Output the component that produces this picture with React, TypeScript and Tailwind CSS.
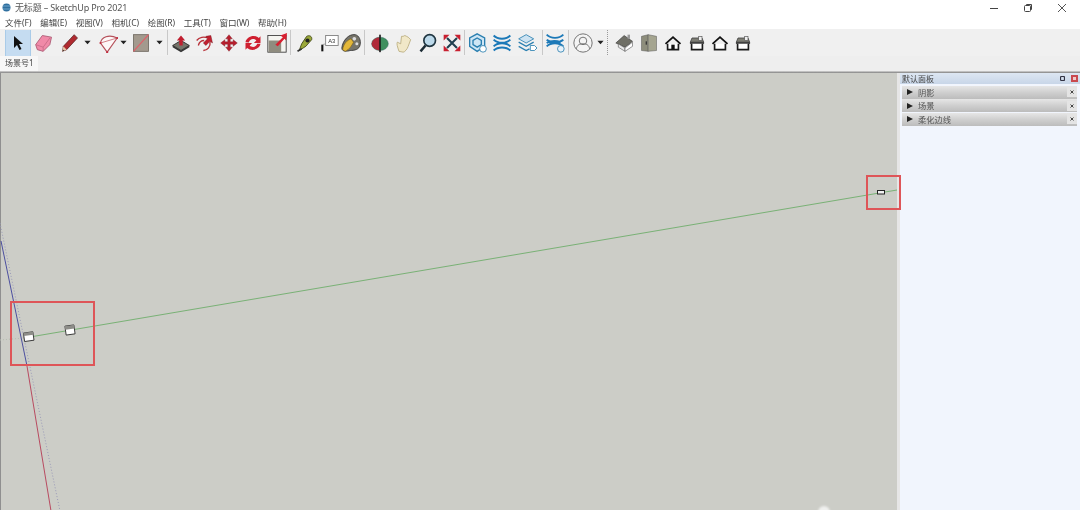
import React from "react";

const CJK = "font-['Noto_Sans','Noto_Sans_CJK_SC',sans-serif]";

function Ico({ children, className = "" }: { children?: React.ReactNode; className?: string }) {
  const width = className.includes("w-[") ? "" : "w-[24px]";
  return (
    <div className={`h-[26px] shrink-0 flex items-center justify-center ${width} ${className}`}>
      <svg width="20" height="20" viewBox="0 0 24 24" className="shrink-0">{children}</svg>
    </div>
  );
}
function Dd({ className = "" }: { className?: string }) {
  const width = className.includes("w-[") ? "" : "w-[8px]";
  return (
    <div className={`h-[26px] shrink-0 flex items-center justify-center ${width} ${className}`}>
      <svg width="7" height="5" viewBox="0 0 8 5" className="shrink-0"><path d="M0.500 0.500h7L4 4.500z" fill="#222" /></svg>
    </div>
  );
}
function Sep({ className = "" }: { className?: string }) {
  return <div className={`h-[25px] w-[1px] shrink-0 bg-[#c8c8c8] ${className}`} />;
}
function MenuItem({ t }: { t: string }) {
  return <span className="text-[8.5px] leading-[14px] text-[#444] whitespace-nowrap">{t}</span>;
}
function PanelRow({ t }: { t: string }) {
  return (
    <div className="h-[13px] ml-[2px] mr-[3px] mb-[0.5px] flex items-center bg-gradient-to-b from-[#e6e6e6] via-[#cfcfcf] to-[#bcbcbc]">
      <svg width="6" height="6" viewBox="0 0 6 6" className="ml-[5px]"><path d="M0 0l6 3-6 3z" fill="#222" /></svg>
      <span className="ml-[5px] text-[8.25px] leading-[13px] text-[#555]">{t}</span>
      <div className="ml-auto w-[10px] h-[10px] bg-[#e4e4e4] flex items-center justify-center">
        <svg width="6" height="6" viewBox="0 0 6 6"><path d="M1.500 1.500l3 3M4.500 1.500l-3 3" stroke="#444" strokeWidth="1" /></svg>
      </div>
    </div>
  );
}

function House({ roof = "#6f6f66", body = "#fff", door = false }: { roof?: string; body?: string; door?: boolean }) {
  return (
    <>
      <path d="M5.500 13v7h13v-7" fill={body} stroke="#1c1c1c" strokeWidth="2" />
      <path d="M3 13l9-8 9 8" fill="none" stroke={roof} strokeWidth="2.200" />
      {door && <rect x="10" y="14" width="4" height="6" fill="#111" />}
    </>
  );
}
function Shed() {
  return (
    <>
      <path d="M4 11l2-5h12l2 5z" fill="#7d7d74" stroke="#444" />
      <rect x="14" y="4" width="4" height="5" fill="#eee" stroke="#555" strokeWidth="0.800" />
      <rect x="3.500" y="11" width="17" height="2" fill="#333" />
      <path d="M5.500 13v7h13v-7" fill="#fff" stroke="#1c1c1c" strokeWidth="2" />
    </>
  );
}

export default function App() {
  return (
    <div className={`w-[1080px] h-[510px] overflow-hidden flex flex-col bg-white blur-[0.35px] ${CJK}`}>
      {/* title */}
      <div className="h-[15px] flex items-center shrink-0 relative">
        <svg width="9" height="9" viewBox="0 0 9 9" className="ml-[2px]"><circle cx="4.500" cy="4.500" r="4" fill="#2f6f9f" /><path d="M1 3h7M1 6h7" stroke="#8fc0e0" strokeWidth="0.700" /></svg>
        <span className="ml-[4px] text-[9px] leading-[14px] text-[#555] tracking-[-0.16px] whitespace-nowrap">无标题 – SketchUp Pro 2021</span>
        <div className="ml-auto flex items-center">
          <svg width="10" height="10" viewBox="0 0 10 10" className="mr-[24px]"><path d="M1 5.500h8" stroke="#444" /></svg>
          <svg width="10" height="10" viewBox="0 0 10 10" className="mr-[24px]"><rect x="1.500" y="2.500" width="6" height="6" rx="1" fill="none" stroke="#444" /><path d="M3.500 2.500v-1h5v5h-1" fill="none" stroke="#444" /></svg>
          <svg width="10" height="10" viewBox="0 0 10 10" className="mr-[13px]"><path d="M1 1l8 8M9 1L1 9" stroke="#555" /></svg>
        </div>
      </div>
      {/* menu */}
      <div className="h-[14px] shrink-0 flex items-center gap-[8.7px] pl-[5px] pt-[1px]">
        {["文件(F)", "编辑(E)", "视图(V)", "相机(C)", "绘图(R)", "工具(T)", "窗口(W)", "帮助(H)"].map((m) => (
          <MenuItem key={m} t={m} />
        ))}
      </div>
      {/* toolbar */}
      <div className="h-[27px] shrink-0 bg-[#f0f0f0] flex items-center pl-[5px]">
        <div className="w-[26px] h-[26px] bg-[#c5dcf1] border-x border-[#a9cbe8] flex items-center justify-center shrink-0">
          <svg width="14" height="16" viewBox="0 0 14 16"><path d="M3 1v12l3-3 2.500 5 2-1-2.500-5h4z" fill="#111" /></svg>
        </div>
        <Ico className="w-[26px]">
          <path d="M2 14L10 3l11 2-2 9-8 8-7-2z" fill="#f08aa8" stroke="#a8566f" />
          <path d="M2 14l9 3 8-11M11 17l0 5" fill="none" stroke="#c66a86" />
        </Ico>
        <Ico className="w-[26px]">
          <path d="M3 22l1-6L17 2l4 4L8 20z" fill="#b02a30" stroke="#4a1a1a" strokeWidth="0.800" />
          <path d="M3 22l1-6 4 4z" fill="#e8c8a8" />
          <path d="M3 22l1-2 1 1z" fill="#111" />
        </Ico>
        <Dd />
        <Ico className="w-[24px] ml-[5px]">
          <path d="M3 12C4 5 13 1 23 6L11 23z" fill="#fdf7f7" stroke="#b5505a" strokeWidth="1.400" />
          <path d="M3 12l20-6" stroke="#c96a72" strokeWidth="1" />
          <circle cx="11" cy="23" r="1.300" fill="#c03040" />
          <circle cx="3" cy="12" r="1.300" fill="#c03040" />
          <circle cx="23" cy="6" r="1.300" fill="#c03040" />
        </Ico>
        <Dd className="w-[6px]" />
        <Ico className="w-[24px] ml-[3px]">
          <rect x="3" y="2" width="18" height="20" fill="#a39a8e" stroke="#6d675e" />
          <path d="M3 22L21 2" stroke="#e0606a" strokeWidth="1.500" />
        </Ico>
        <Dd className="ml-[2px]" />
        <Sep className="ml-[4px]" />
        <Ico className="ml-[1px]">
          <path d="M2 15l10-6 10 6-10 6z" fill="#74746a" stroke="#222" />
          <path d="M2 15v2l10 6 10-6v-2l-10 6z" fill="#333" />
          <path d="M12 3l5 6h-3v6h-4V9H7z" fill="#c01f2f" />
        </Ico>
        <Ico>
          <path d="M2 9c3-4 9-5 13-3M4 15c1-4 4-6 7-6M10 21c5 0 9-5 8-11" fill="none" stroke="#b83038" strokeWidth="1.600" />
          <path d="M19 3l2 9-3-2-5 5-3-3 5-5-2-3z" fill="#c01f2f" stroke="#701018" strokeWidth="0.500" />
        </Ico>
        <Ico>
          <path d="M12 2l4 5h-2.500v3.500H17V8l5 4-5 4v-2.500h-3.500V17H16l-4 5-4-5h2.500v-3.500H7V16l-5-4 5-4v2.500h3.500V7H8z" fill="#b81f2d" stroke="#6a1018" strokeWidth="0.400" />
        </Ico>
        <Ico>
          <path d="M3 11C4 5 13 1 19 6l2-2v8h-8l3-3C13 6 8 7 7 11.500z" fill="#cf2030" />
          <path d="M21 13c-1 6-10 10-16 5l-2 2v-8h8l-3 3c3 3 8 2 9-2z" fill="#cf2030" />
        </Ico>
        <Ico>
          <rect x="1" y="3" width="22" height="20" fill="#f4f4f0" stroke="#333" />
          <rect x="2" y="9" width="15" height="14" fill="#8f8c7f" />
          <path d="M10 14L19 5l-3-2 8-3-1 9-2-2-8 9z" fill="#d81f30" />
        </Ico>
        <Sep className="ml-[1px]" />
        <Ico className="ml-[2px]">
          <path d="M5 21l3-8 6-9c3-2 7 0 6 4l-7 8z" fill="#9aa83a" stroke="#3a4010" />
          <circle cx="15" cy="9" r="2.500" fill="#222" />
          <path d="M3 22l5-3" stroke="#333" strokeWidth="2" />
        </Ico>
        <Ico>
          <rect x="8" y="3" width="15" height="12" fill="#fff" stroke="#777" />
          <text x="11" y="12" fontSize="7" fill="#333" fontFamily="Liberation Sans, sans-serif">A3</text>
          <path d="M4 14v8" stroke="#111" strokeWidth="2.500" />
          <path d="M4 14l4-1" stroke="#999" />
        </Ico>
        <Ico className="w-[20px]">
          <path d="M1 18C2 9 9 1 17 2c5 1 7 7 6 12-1 6-7 7-12 7-3 1-10 2-10-3z" fill="#76746a" stroke="#333" />
          <path d="M2 20c1-7 5-11 10-13l3 4c-2 4-5 9-10 11z" fill="#e4b83a" stroke="#6c5410" strokeWidth="0.600" />
          <circle cx="16" cy="7" r="2.200" fill="#ddd" /><circle cx="19" cy="13" r="1.800" fill="#ddd" />
        </Ico>
        <Sep className="ml-[3px]" />
        <Ico className="ml-[3px]">
          <ellipse cx="12" cy="13" rx="10" ry="8" fill="#3f8f5f" stroke="#255" strokeWidth="0.500" />
          <path d="M2 13c0-4 5-8 10-8v16c-5 0-10-4-10-8z" fill="#b02a3a" />
          <rect x="11" y="2" width="2" height="21" fill="#1f1f1f" />
        </Ico>
        <Ico>
          <path d="M6 22C4 16 3 13 4 11l4 2 1-9 2 0 2-1 2 1 2 1 3 3-3 8c-1 3-4 7-6 7z" fill="#f1e8c8" stroke="#b8ab7c" />
        </Ico>
        <Ico>
          <circle cx="14" cy="9" r="7" fill="#bcd9ea" stroke="#1f3540" strokeWidth="2" />
          <path d="M9 15L3 22" stroke="#1a2a33" strokeWidth="3" />
        </Ico>
        <Ico>
          <path d="M6 6l12 12M18 6L6 18" stroke="#204050" strokeWidth="2.500" />
          <path d="M2 2h7L2 9zM22 2v7l-7-7zM2 22v-7l7 7zM22 22h-7l7-7z" fill="#c82030" />
        </Ico>
        <Sep />
        <Ico className="ml-[1px]">
          <path d="M11 1l9 5v10l-9 6-9-6V6z" fill="#cfe6f5" stroke="#2a7fb0" strokeWidth="1.600" />
          <path d="M11 6l5 3v5l-5 3-5-3V9z" fill="none" stroke="#2a7fb0" strokeWidth="1.600" />
          <circle cx="18" cy="19" r="4" fill="#fff" stroke="#2a7fb0" />
        </Ico>
        <Ico>
          <path d="M2 3c5 5 15 5 20 0M2 21c5-5 15-5 20 0M2 8c5 5 15 5 20 0M2 16c5-5 15-5 20 0" fill="none" stroke="#1c79b8" strokeWidth="2.400" />
        </Ico>
        <Ico className="w-[26px]">
          <path d="M2 7l9-5 9 5-9 5z" fill="#cde3f2" stroke="#2a7fb0" />
          <path d="M2 11l9 5 9-5M2 16l9 5 4-2" fill="none" stroke="#2a7fb0" strokeWidth="1.600" />
          <path d="M16 15h5l3 3-3 3h-5z" fill="#fff" stroke="#2a7fb0" />
        </Ico>
        <Sep className="ml-[2px]" />
        <Ico>
          <path d="M2 2c5 5 15 5 20 0M2 16c5-5 15-5 20 0M2 8c5 4 15 4 20 0M2 12c5-3 12-3 17-1" fill="none" stroke="#1c79b8" strokeWidth="2.200" />
          <circle cx="19" cy="19" r="4" fill="#e8f2fa" stroke="#2a7fb0" />
        </Ico>
        <Sep className="ml-[1px]" />
        <Ico className="ml-[2px]">
          <circle cx="12" cy="12" r="11" fill="#f4f4f4" stroke="#6a6a6a" strokeWidth="1.100" />
          <circle cx="12" cy="9.500" r="4.500" fill="none" stroke="#6a6a6a" strokeWidth="1.100" />
          <path d="M4 19c1-5 4-6 8-6s7 1 8 6" fill="none" stroke="#6a6a6a" strokeWidth="1.100" />
        </Ico>
        <Dd className="ml-[1px]" />
        <div className="ml-[3px] h-[25px] w-[1px] shrink-0 border-l border-dotted border-[#999]" />
        <Ico className="ml-[5px]">
          <path d="M1 12L11 3l10 7-9 7z" fill="#6f6f66" stroke="#333" strokeWidth="0.700" />
          <path d="M4 13l8 5v4l-8-5z" fill="#e8e8e8" stroke="#555" strokeWidth="0.700" />
          <path d="M12 18l9-7v5l-9 6z" fill="#fff" stroke="#555" strokeWidth="0.700" />
          <rect x="15" y="2" width="3" height="5" fill="#999" />
        </Ico>
        <Ico>
          <path d="M3 4l8-2v20l-8-1z" fill="#8e8e7c" stroke="#555" strokeWidth="0.600" />
          <path d="M11 2l10 2v17l-10 1z" fill="#a5a590" stroke="#555" strokeWidth="0.600" />
          <rect x="8" y="10" width="1.500" height="4" fill="#333" />
        </Ico>
        <Ico><House roof="#111" door /></Ico>
        <Ico><Shed /></Ico>
        <Ico className="w-[22px]"><House roof="#111" /></Ico>
        <Ico><Shed /></Ico>
      </div>
      {/* tab row */}
      <div className="h-[15px] shrink-0 bg-[#eeeeee] flex items-end">
        <div className="h-[15px] w-[38px] bg-[#f7f7f7] text-[8px] leading-[13px] text-[#444] pl-[5px] whitespace-nowrap">场景号1</div>
      </div>
      <div className="h-[2px] shrink-0 bg-gradient-to-b from-[#d8d8d8] to-[#7f7f7f]" />
      {/* main */}
      <div className="flex-1 flex min-h-0">
        <div className="relative w-[897px] bg-[#cccdc7] border-l border-[#8f8f8f] shrink-0">
          <svg width="897" height="438" viewBox="0 72 897 438" className="absolute left-[-1px] top-0">
            <path d="M0 339L24 337" stroke="#b5bdb0" strokeDasharray="1 2" />
            <path d="M24 337L897 189" stroke="#6fae6c" strokeWidth="0.900" />
            <path d="M0 222L60 510" stroke="#9a9ab8" strokeDasharray="1 2" />
            <path d="M1 240L27 365" stroke="#4c4f9f" />
            <path d="M27 365L51 510" stroke="#b84a60" />
            <g transform="rotate(-8 28 336)">
              <rect x="24" y="331.500" width="9.500" height="8.500" fill="#fff" stroke="#333" strokeWidth="0.900" />
              <rect x="24" y="331.500" width="9.500" height="3" fill="#8d8d88" />
            </g>
            <g transform="rotate(-8 70 329)">
              <rect x="65.500" y="324.500" width="9" height="9" fill="#fff" stroke="#333" strokeWidth="0.900" />
              <rect x="65.500" y="324.500" width="9" height="3.500" fill="#8d8d88" />
            </g>
            <rect x="877.500" y="189.500" width="7" height="3.500" fill="#f2f2f2" stroke="#222" />
          </svg>
          <div className="absolute left-[9px] top-[228px] w-[85px] h-[65px] border-2 border-[#de5558]" />
          <div className="absolute left-[865px] top-[102px] w-[35px] h-[35px] border-2 border-[#de5558] z-10" />
          <div className="absolute left-[817px] top-[433px] w-[12px] h-[6px] rounded-t-full bg-white/70 blur-[1px]" />
        </div>
        <div className="w-[183px] shrink-0 flex flex-col bg-[#f1f5fd] border-l-[3px] border-[#e6e6e6] relative">
          <div className="h-[11px] flex items-center bg-gradient-to-b from-[#dde6f2] to-[#c8d6e8]">
            <span className="ml-[2px] text-[8px] leading-[11px] text-[#444]">默认面板</span>
            <svg width="5" height="6" viewBox="0 0 5 6" className="ml-auto mr-[6px]"><rect x="0.500" y="0.500" width="4" height="4" rx="1" fill="none" stroke="#334" strokeWidth="1.200" /></svg>
            <div className="w-[7px] h-[7px] bg-[#c9494f] mr-[2px] flex items-center justify-center">
              <div className="w-[3px] h-[3px] bg-[#f1c9c9]" />
            </div>
          </div>
          <div className="h-[1.500px]" />
          <PanelRow t="阴影" />
          <PanelRow t="场景" />
          <PanelRow t="柔化边线" />
        </div>
      </div>
    </div>
  );
}
